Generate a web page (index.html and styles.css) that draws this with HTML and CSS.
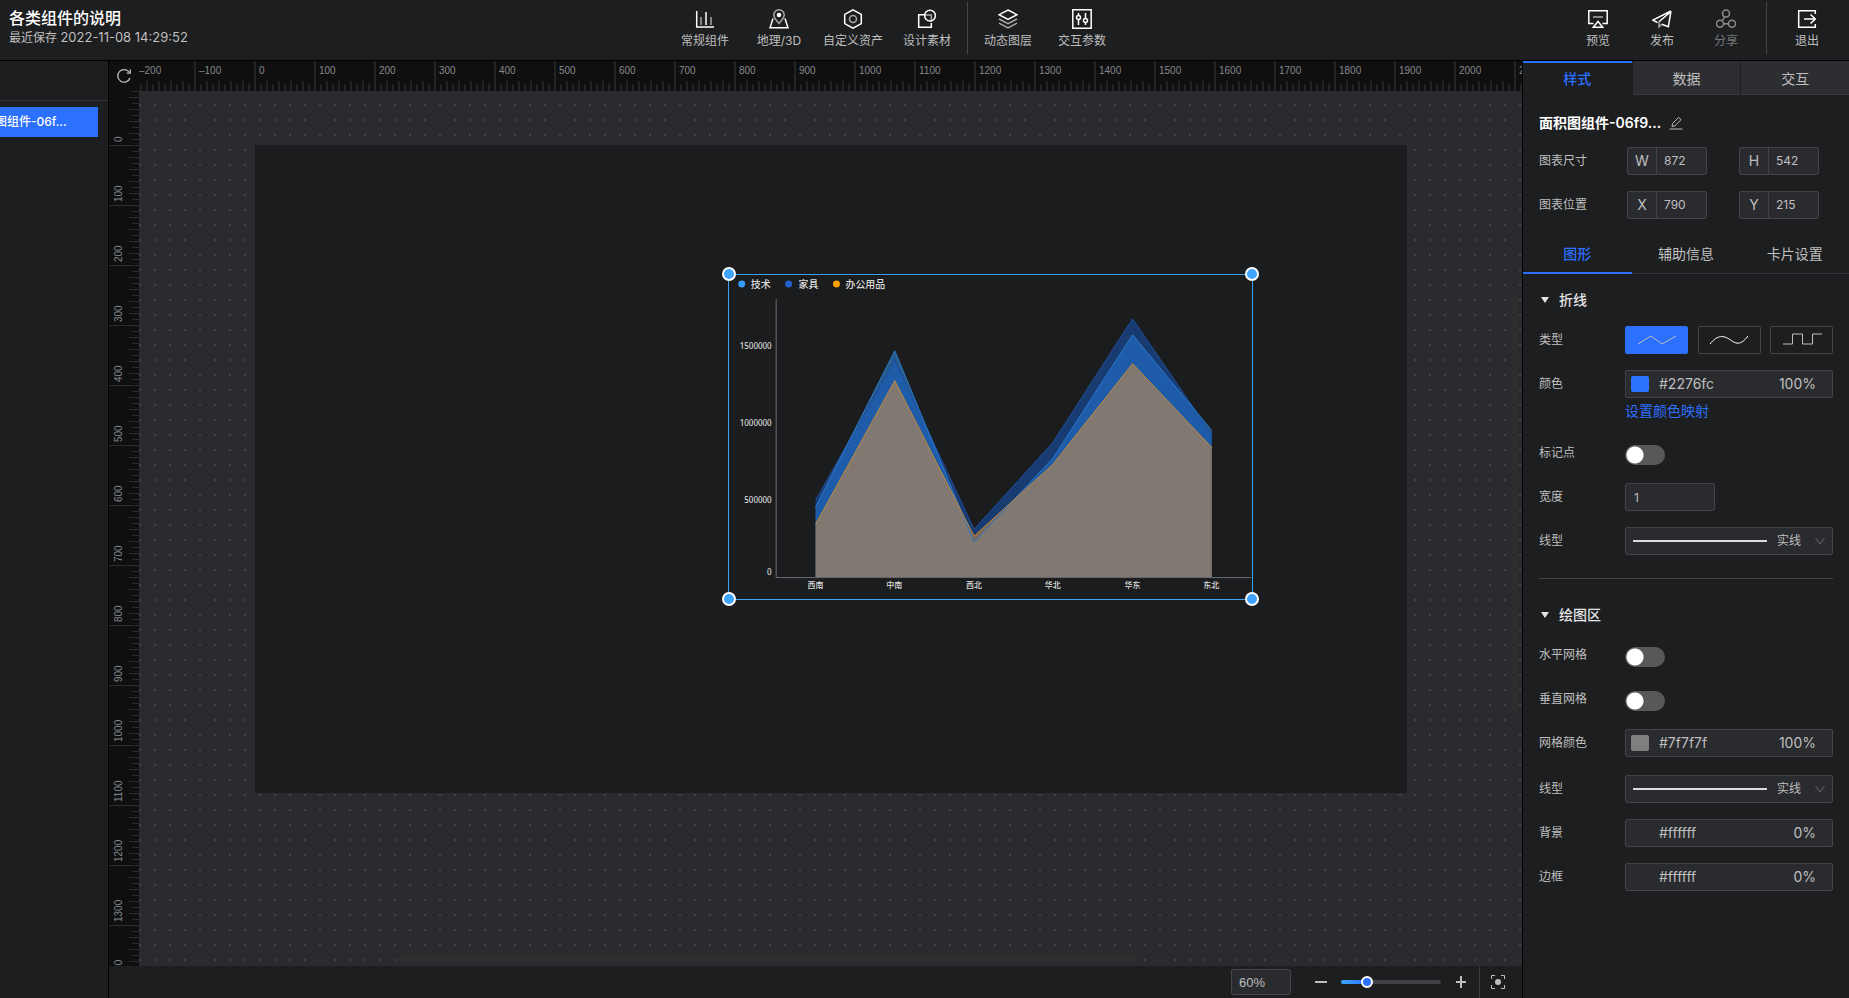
FILE: index.html
```html
<!DOCTYPE html>
<html lang="zh-CN">
<head>
<meta charset="utf-8">
<meta name="viewport" content="width=device-width, initial-scale=1">
<title>各类组件的说明</title>
<link rel="stylesheet" href="styles.css">
</head>
<body>
<div class="app">
  <header class="topbar">
    <div class="doc">
      <h1 class="doc-title">各类组件的说明</h1>
      <p class="doc-saved">最近保存 <time class="doc-time">2022-11-08 14:29:52</time></p>
    </div>
    <nav class="tools">
      <button class="tool" type="button">
        <svg class="icon" viewBox="0 0 20 20"><path d="M1.7 2v16H19" /><path class="dim" d="M6 8v8M16 8v8" /><path d="M11 3v13" /></svg>
        常规组件
      </button>
      <button class="tool" type="button">
        <svg class="icon" viewBox="0 0 20 20"><path d="M4 9.500 1 18.800h18L16 9.500" /><path class="dim" d="M10 14.500C7 11 4.800 9 4.800 6a5.200 5.200 0 0 1 10.400 0c0 3-2.200 5-5.200 8.500z" /><circle class="solid" cx="10" cy="6" r="1.500" /></svg>
        地理/3D
      </button>
      <button class="tool" type="button">
        <svg class="icon" viewBox="0 0 20 20"><path d="m10 .8 8.300 4.600v9.200L10 19.200l-8.300-4.600V5.400z" /><circle class="dim" cx="10" cy="10" r="3.500" /></svg>
        自定义资产
      </button>
      <button class="tool" type="button">
        <svg class="icon" viewBox="0 0 20 20"><path d="M7 5.700H1.700v12.600h12.600V14" /><path class="dim" d="M8 6h6.300v7" /><circle cx="13" cy="6.600" r="5.400" /></svg>
        设计素材
      </button>
      <span class="rule"></span>
      <button class="tool" type="button">
        <svg class="icon" viewBox="0 0 20 20"><path d="m10 1 9 4.700-9 4.700-9-4.700z" /><path class="dim" d="m1 10 9 4.600L19 10M1 14.200l9 4.700 9-4.700" /></svg>
        动态图层
      </button>
      <button class="tool" type="button">
        <svg class="icon" viewBox="0 0 20 20"><path d="M.8.8h18.400v18.400H.8z" /><path d="M6.500 4v2.500M6.500 10.500V16M13.500 4v5.500M13.500 13.500V16" /><circle cx="6.500" cy="8.500" r="2" /><circle cx="13.500" cy="11.500" r="2" /></svg>
        交互参数
      </button>
    </nav>
    <div class="actions">
      <button class="action" type="button">
        <svg class="icon" viewBox="0 0 20 20"><path d="M5.500 14.500H.8V1.700h18.400v12.800h-4.700" /><path d="M5.300 18.300 10 12.500l4.700 5.800z" /><path class="dim" d="M5 8h10" /></svg>
        预览
      </button>
      <button class="action" type="button">
        <svg class="icon" viewBox="0 0 20 20"><path d="M19 2 .9 11.200l4.600 2.300M19 2l-2.700 15.800-6.500-2.600M19 2.500 7 12.800" /><path class="dim" d="M7 12.500v5.300L10 15" /></svg>
        发布
      </button>
      <button class="action" type="button" disabled>
        <svg class="icon" viewBox="0 0 20 20"><circle cx="10" cy="4.500" r="3.500" /><circle cx="4" cy="14.800" r="3.500" /><circle cx="16" cy="14.800" r="3.500" /><path d="M8.500 8 6.200 11.800M8 14.800h4.500" /></svg>
        分享
      </button>
      <span class="rule"></span>
      <button class="action exit" type="button">
        <svg class="icon" viewBox="0 0 20 20"><path d="M18.300 5V1.700H1.700v16.600h16.600V15" /><path d="M7 10h11M13.500 5.500 18.300 10l-4.800 4.500" /></svg>
        退出
      </button>
    </div>
  </header>

  <div class="workspace">
    <aside class="layers">
      <div class="layers-head"></div>
      <button class="layer" type="button">面积图组件-06f...</button>
    </aside>

    <main class="stage">
      <button class="corner" type="button" aria-label="重置视图">
        <svg class="corner-icon" viewBox="0 0 16 16"><path d="M13.400 4.500A6.300 6.300 0 1 0 14 10" /><path d="M14.300 1.500v3.700h-3.600" /></svg>
      </button>
      <div class="ruler-x">
        <div class="marks-x">
          <span>–200</span><span>–100</span><span>0</span><span>100</span><span>200</span><span>300</span><span>400</span><span>500</span><span>600</span><span>700</span><span>800</span><span>900</span><span>1000</span><span>1100</span><span>1200</span><span>1300</span><span>1400</span><span>1500</span><span>1600</span><span>1700</span><span>1800</span><span>1900</span><span>2000</span><span>2100</span>
        </div>
      </div>
      <div class="ruler-y">
        <div class="marks-y">
          <span>0</span><span>100</span><span>200</span><span>300</span><span>400</span><span>500</span><span>600</span><span>700</span><span>800</span><span>900</span><span>1000</span><span>1100</span><span>1200</span><span>1300</span><span>1400</span>
        </div>
      </div>
      <div class="canvas">
        <div class="artboard">
          <div class="widget">
            <svg class="chart" viewBox="0 0 523 325" role="img" aria-label="面积图">
              <g class="legend">
                <circle cx="12" cy="9" r="3.500" fill="#339af5" /><text x="21" y="13">技术</text>
                <circle cx="59" cy="9" r="3.500" fill="#245fcb" /><text x="69" y="13">家具</text>
                <circle cx="107" cy="9" r="3.500" fill="#f8a100" /><text x="116" y="13">办公用品</text>
              </g>
              <path class="axis" d="M46.500 24v279.500H523" />
              <g class="y-labels">
                <text x="42" y="74">1500000</text>
                <text x="42" y="151">1000000</text>
                <text x="42" y="229">500000</text>
                <text x="42" y="301">0</text>
              </g>
              <path class="area tech" d="M86 233 165.500 76l79.500 192 79-84 80-124 79.500 96v147H86z" />
              <path class="area furniture" d="M86 226 165.500 85l79.500 170 79-87 80-124 79.500 116v143H86z" />
              <path class="area office" d="M86 250 165.500 106l79.500 156 79-72 80-101 79.500 84v130H86z" />
              <path class="line furniture-line" d="M86 226 165.500 85l79.500 170 79-87 80-124 79.500 116" />
              <path class="line tech-line" d="M86 233 165.500 76l79.500 192 79-84 80-124 79.500 96" />
              <path class="line office-line" d="M86 250 165.500 106l79.500 156 79-72 80-101 79.500 84" />
              <g class="x-labels">
                <text x="86" y="314">西南</text><text x="165" y="314">中南</text><text x="245" y="314">西北</text><text x="324" y="314">华北</text><text x="404" y="314">华东</text><text x="483" y="314">东北</text>
              </g>
            </svg>
            <span class="handle nw"></span><span class="handle ne"></span><span class="handle sw"></span><span class="handle se"></span>
          </div>
        </div>
        <span class="scroll-y"></span>
        <span class="scroll-x"></span>
      </div>
      <footer class="zoombar">
        <input class="zoom-value" type="text" value="60%" aria-label="缩放比例">
        <button class="zoom-btn" type="button" aria-label="缩小"><svg viewBox="0 0 12 12"><path d="M0 6h12" /></svg></button>
        <input class="zoom-range" type="range" min="10" max="230" value="60" aria-label="缩放">
        <button class="zoom-btn" type="button" aria-label="放大"><svg viewBox="0 0 12 12"><path d="M1 6h10M6 0v12" /></svg></button>
        <button class="fit" type="button" aria-label="适应画布"><svg viewBox="0 0 14 14"><path d="M.5 4V.5H4M10 .5h3.500V4M13.500 10v3.500H10M4 13.500H.5V10" /><circle cx="7" cy="7" r="3" /></svg></button>
      </footer>
    </main>

    <aside class="inspector">
      <div class="tabs">
        <button class="tab active" type="button">样式</button>
        <button class="tab" type="button">数据</button>
        <button class="tab" type="button">交互</button>
      </div>
      <div class="basics">
        <div class="name">
          <h2 class="name-text">面积图组件-06f9...</h2>
          <button class="edit" type="button" aria-label="重命名"><svg viewBox="0 0 14 14"><path d="M.5 13h13M3 10.500l.6-3L9.700 1.400l2.300 2.300L5.900 9.900z" /></svg></button>
        </div>
        <div class="pair">
          <span class="label">图表尺寸</span>
          <div class="affix"><label for="w">W</label><input id="w" type="text" value="872"></div>
          <div class="affix"><label for="h">H</label><input id="h" type="text" value="542"></div>
        </div>
        <div class="pair">
          <span class="label">图表位置</span>
          <div class="affix"><label for="x">X</label><input id="x" type="text" value="790"></div>
          <div class="affix"><label for="y">Y</label><input id="y" type="text" value="215"></div>
        </div>
      </div>
      <div class="subtabs">
        <button class="subtab active" type="button">图形</button>
        <button class="subtab" type="button">辅助信息</button>
        <button class="subtab" type="button">卡片设置</button>
      </div>

      <section class="section">
        <h3 class="section-title">折线</h3>
        <div class="fields">
          <div class="field">
            <span class="label">类型</span>
            <div class="types">
              <button class="type selected" type="button" aria-label="折线"><svg viewBox="0 0 40 14"><path d="M1 11 14 3l11 8 14-8" /></svg></button>
              <button class="type bright" type="button" aria-label="曲线"><svg viewBox="0 0 40 14"><path d="M1 11C9 1 15 3 20 6s10 9 19-3" /></svg></button>
              <button class="type" type="button" aria-label="阶梯"><svg viewBox="0 0 40 14"><path d="M1 11h9.500V1h10v10h10V1H40" /></svg></button>
            </div>
          </div>
          <div class="field">
            <label class="label" for="color">颜色</label>
            <div class="control">
              <div class="color"><button class="swatch blue" type="button" aria-label="选择颜色"></button><input id="color" class="hex" type="text" value="#2276fc"><input class="alpha" type="text" value="100%" aria-label="颜色透明度"></div>
              <a class="map-link" href="#">设置颜色映射</a>
            </div>
          </div>
          <div class="field">
            <label class="label" for="marker">标记点</label>
            <input id="marker" class="switch" type="checkbox">
          </div>
          <div class="field">
            <label class="label" for="width">宽度</label>
            <input id="width" class="number" type="text" value="1">
          </div>
          <div class="field">
            <label class="label" for="dash">线型</label>
            <div class="picker"><span class="sample"></span><select id="dash"><option>实线</option></select><svg viewBox="0 0 10 8"><path d="m.5 1 4.500 6L9.500 1" /></svg></div>
          </div>
        </div>
      </section>

      <section class="section plot">
        <h3 class="section-title">绘图区</h3>
        <div class="fields">
          <div class="field">
            <label class="label" for="hgrid">水平网格</label>
            <input id="hgrid" class="switch" type="checkbox">
          </div>
          <div class="field">
            <label class="label" for="vgrid">垂直网格</label>
            <input id="vgrid" class="switch" type="checkbox">
          </div>
          <div class="field">
            <label class="label" for="gridcolor">网格颜色</label>
            <div class="color"><button class="swatch grey" type="button" aria-label="选择网格颜色"></button><input id="gridcolor" class="hex" type="text" value="#7f7f7f"><input class="alpha" type="text" value="100%" aria-label="网格透明度"></div>
          </div>
        </div>
        <div class="fields extra">
          <div class="field">
            <label class="label" for="griddash">线型</label>
            <div class="picker"><span class="sample"></span><select id="griddash"><option>实线</option></select><svg viewBox="0 0 10 8"><path d="m.5 1 4.500 6L9.500 1" /></svg></div>
          </div>
          <div class="field">
            <label class="label" for="bg">背景</label>
            <div class="color"><button class="swatch" type="button" aria-label="选择背景颜色"></button><input id="bg" class="hex" type="text" value="#ffffff"><input class="alpha" type="text" value="0%" aria-label="背景透明度"></div>
          </div>
          <div class="field">
            <label class="label" for="border">边框</label>
            <div class="color"><button class="swatch" type="button" aria-label="选择边框颜色"></button><input id="border" class="hex" type="text" value="#ffffff"><input class="alpha" type="text" value="0%" aria-label="边框透明度"></div>
          </div>
        </div>
      </section>
    </aside>
  </div>
</div>
</body>
</html>
```

FILE: styles.css
```css
:root {
  --panel: #1d1e20;
  --field: #2a2b2f;
  --line: #434446;
  --text: #bfbfbf;
  --blue: #2c70ff;
}

* { box-sizing: border-box; }

body {
  margin: 0;
  background: var(--panel);
  color: var(--text);
  font: 12px/16px Inter, "Noto Sans CJK SC", sans-serif;
}

h1, h2, h3, p { margin: 0; }

button, input, select {
  margin: 0;
  padding: 0;
  border: 0;
  background: none;
  color: inherit;
  font: inherit;
}

svg { fill: none; stroke: currentColor; }

.app {
  display: flex;
  flex-direction: column;
  height: 100vh;
}

/* Top bar */
.topbar {
  display: grid;
  grid-template-columns: minmax(0, 668fr) auto minmax(0, 730fr);
  height: 61px;
  flex: none;
  border-bottom: 1px solid #000;
}

.doc { padding: 8px 9px 0; white-space: nowrap; }

.doc-title {
  color: #fff;
  font-size: 16px;
  font-weight: 500;
  line-height: 20px;
}

.doc-saved { font-size: 12px; line-height: 18px; }
.doc-time { font-size: 13px; }

.tools, .actions { display: flex; }
.actions { justify-content: flex-end; padding-right: 10px; }

.tool, .action {
  display: flex;
  flex-direction: column;
  align-items: center;
  gap: 4px;
  padding-top: 9px;
  white-space: nowrap;
}

.tool { width: 74px; }
.action { width: 64px; }
.action:disabled { color: #77787a; }

.rule {
  width: 1px;
  height: 52px;
  margin: 2px 3px 0;
  background: #444547;
}
.actions .rule { margin: 2px 8px 0; }

.icon {
  width: 20px;
  height: 20px;
  stroke: #fff;
  stroke-width: 1.500;
}
.icon .dim { stroke: #a8a8a8; }
.icon .solid { fill: #fff; }
.action:disabled .icon { stroke: #8a8b8c; }

/* Workspace */
.workspace {
  display: grid;
  grid-template: minmax(0, 1fr) / 109px minmax(0, 1fr) 326px;
  flex: 1;
  min-height: 0;
}

.layers { overflow: hidden; border-right: 1px solid #000; }
.layers-head { height: 40px; border-bottom: 1px solid #343538; }

.layer {
  width: 158px;
  height: 30px;
  margin: 6px 0 0 -60px;
  padding-left: 31px;
  background: var(--blue);
  color: #fff;
  font-weight: 500;
  text-align: left;
}

.stage {
  display: grid;
  grid-template: 30px minmax(0, 1fr) 32px / 30px minmax(0, 1fr);
  border-right: 1px solid #000;
}

.corner { display: grid; place-items: center; background: #0f0f0f; }
.corner-icon { width: 16px; height: 16px; stroke-width: 1.300; }

.ruler-x, .ruler-y {
  overflow: hidden;
  background-color: #0f0f0f;
  color: #85888d;
  font: 10px/12px "Liberation Sans", sans-serif;
}

/* Short tick every 12px, medium tick between, full tick every 60px */
.ruler-x {
  background-image:
    linear-gradient(90deg, #232425 2px, transparent 2px),
    linear-gradient(90deg, #232425 2px, transparent 2px),
    linear-gradient(90deg, #232425 2px, transparent 2px);
  background-size: 60px 100%, 12px 10px, 12px 7px;
  background-position: 55px 0, 7px 100%, 1px 100%;
  background-repeat: repeat-x;
}

.marks-x { display: flex; width: max-content; margin-left: -4px; padding-top: 4px; }
.marks-x span { width: 60px; padding-left: 4px; }

.ruler-y {
  background-image:
    linear-gradient(#2c2d2e 1px, transparent 1px),
    linear-gradient(#2c2d2e 1px, transparent 1px),
    linear-gradient(#2c2d2e 1px, transparent 1px);
  background-size: 100% 60px, 10px 12px, 7px 12px;
  background-position: 0 54px, 100% 6px, 100% 0;
  background-repeat: repeat-y;
}

.marks-y { margin-top: -6px; }
.marks-y span {
  display: block;
  width: 12px;
  height: 60px;
  margin-left: 4px;
  padding-top: 3px;
  writing-mode: vertical-rl;
  transform: rotate(180deg);
}

.canvas {
  position: relative;
  overflow: hidden;
  background-color: var(--field);
  background-image: conic-gradient(from 270deg at 2px 2px, #424347 90deg, transparent 90deg);
  background-size: 15px 15px;
  background-position: 0 13px;
}

.artboard {
  position: absolute;
  left: 116px;
  top: 54px;
  width: 1152px;
  height: 648px;
  background: #1b1c1e;
}

.widget {
  position: absolute;
  left: 473px;
  top: 129px;
  width: 525px;
  height: 326px;
  border: 1px solid #3e9ffb;
}

.chart { display: block; width: 100%; height: 100%; }
.chart text { fill: #dcdcdc; stroke: none; font: 500 8px "Noto Sans", "Noto Sans CJK SC", sans-serif; }
.chart .legend { stroke: none; }
.chart .legend text { font-size: 10px; }
.y-labels text { text-anchor: end; }
.x-labels text { text-anchor: middle; }
.axis { stroke: #6b6c70; }
.area { stroke: none; fill-opacity: 0.5; }
.tech { fill: #339af5; }
.furniture { fill: #155cc6; }
.office { fill: #e49739; }
.furniture-line { stroke: #1f4c9a; }
.tech-line { stroke: #2a78cc; }
.office-line { stroke: #c08a40; }

.handle {
  position: absolute;
  width: 14px;
  height: 14px;
  border: 2px solid #fff;
  border-radius: 50%;
  background: #3fa4ff;
}
.nw, .ne { top: -8px; }
.sw, .se { bottom: -7px; }
.nw, .sw { left: -7px; }
.ne, .se { right: -7px; }

.scroll-y, .scroll-x { position: absolute; border-radius: 3px; background: #2e2e2e; }
.scroll-y { right: 4px; top: 203px; width: 6px; height: 417px; }
.scroll-x { left: 260px; bottom: 4px; width: 739px; height: 6px; }

.zoombar {
  grid-column: 1 / -1;
  display: flex;
  align-items: center;
  justify-content: flex-end;
}

.zoom-value {
  width: 60px;
  height: 26px;
  margin-right: 24px;
  padding-left: 7px;
  border: 1px solid var(--line);
  border-radius: 2px;
  background: var(--field);
  font: 13px "Liberation Sans", sans-serif;
}

.zoom-btn, .fit { display: grid; place-items: center; }
.zoom-btn svg { width: 12px; height: 12px; stroke-width: 2; }

.zoom-range {
  width: 100px;
  height: 12px;
  margin: 0 14px;
  appearance: none;
}
.zoom-range::-webkit-slider-runnable-track {
  height: 4px;
  border-radius: 2px;
  background: linear-gradient(90deg, #3fa9ff, var(--blue) 26px, #414247 26px);
}
.zoom-range::-webkit-slider-thumb {
  width: 12px;
  height: 12px;
  margin-top: -4px;
  border: 2px solid #fff;
  border-radius: 50%;
  background: var(--blue);
  appearance: none;
}

.fit {
  width: 43px;
  height: 32px;
  margin-left: 12px;
  padding-right: 6px;
  border-left: 1px solid #3a3b3d;
}
.fit svg { width: 14px; height: 14px; }
.fit circle { fill: currentColor; stroke: none; }

/* Inspector */
.inspector { overflow: hidden; }

.tabs, .subtabs { display: grid; grid-template-columns: repeat(3, 1fr); }

.tab {
  height: 34px;
  border-top: 2px solid #2d2e32;
  border-bottom: 1px solid #3a3b3d;
  border-left: 1px solid var(--panel);
  background: #2d2e32;
  font-size: 14px;
}
.tab.active {
  border-color: var(--blue) transparent transparent;
  border-left: 0;
  background: none;
  color: var(--blue);
  font-weight: 500;
}

.basics {
  display: flex;
  flex-direction: column;
  gap: 16px;
  padding: 18px 30px 17px 16px;
}

.name { display: flex; align-items: center; gap: 8px; height: 20px; margin-bottom: -2px; }
.name-text { color: #fff; font-size: 14px; font-weight: 600; line-height: 20px; }
.edit { display: grid; }
.edit svg { width: 14px; height: 14px; }

.pair {
  display: grid;
  grid-template-columns: 56px 80px 80px;
  justify-content: space-between;
  align-items: center;
}

.affix {
  display: flex;
  height: 28px;
  border: 1px solid var(--line);
  border-radius: 2px;
  background: var(--field);
}
.affix label {
  width: 29px;
  flex: none;
  border-right: 1px solid var(--line);
  font-size: 14px;
  line-height: 26px;
  text-align: center;
}
.affix input { width: 100%; min-width: 0; padding-left: 7px; }

.subtabs { border-bottom: 1px solid #343538; }
.subtab { height: 38px; border-bottom: 2px solid transparent; margin-bottom: -1px; font-size: 14px; }
.subtab.active { border-color: var(--blue); color: var(--blue); font-weight: 500; }

.section { padding: 16px 16px 23px; }
.section.plot { margin: 0 16px; padding: 26px 0 0; border-top: 1px solid var(--line); }

.section-title {
  display: flex;
  align-items: center;
  gap: 10px;
  margin-bottom: 16px;
  padding-left: 2px;
  color: #e4e4e4;
  font-size: 14px;
  font-weight: 500;
  line-height: 20px;
}
.section-title::before {
  content: "";
  border: solid transparent;
  border-width: 6px 4px 0;
  border-top-color: #e4e4e4;
}

.fields { display: flex; flex-direction: column; gap: 16px; }
.fields.extra { margin-top: 18px; }

.field {
  display: grid;
  grid-template-columns: 86px minmax(0, 1fr);
  min-height: 28px;
}
.label { line-height: 28px; }

.types { display: flex; justify-content: space-between; }
.type {
  display: grid;
  place-items: center;
  width: 63px;
  height: 28px;
  border: 1px solid var(--line);
  border-radius: 2px;
}
.type.selected { border-color: var(--blue); background: var(--blue); }
.type.bright { color: #fff; }
.type svg { width: 40px; height: 14px; }

.color {
  display: flex;
  align-items: center;
  height: 28px;
  padding: 0 16px 0 5px;
  border: 1px solid var(--line);
  border-radius: 2px;
  background: var(--field);
  font-size: 14px;
}
.swatch { width: 18px; height: 16px; flex: none; border-radius: 2px; }
.swatch.blue { background: #2c74fe; }
.swatch.grey { background: #7f7f7f; }
.hex { flex: 1; min-width: 0; padding-left: 10px; }
.alpha { width: 48px; text-align: right; }

.map-link {
  display: block;
  height: 25px;
  color: var(--blue);
  font-size: 14px;
  line-height: 26px;
  text-decoration: none;
}

.switch {
  align-self: end;
  width: 40px;
  height: 20px;
  margin-bottom: 2px;
  border-radius: 10px;
  background: radial-gradient(circle at 10px 50%, #fff 8px, #585858 9px);
  appearance: none;
}

.number {
  width: 90px;
  height: 28px;
  padding-left: 8px;
  border: 1px solid var(--line);
  border-radius: 2px;
  background: var(--field);
}

.picker {
  display: flex;
  align-items: center;
  height: 28px;
  padding: 0 7px;
  border: 1px solid var(--line);
  border-radius: 2px;
  background: var(--field);
}
.sample { flex: 1; height: 2px; margin-right: 10px; background: #dcdcdc; }
.picker select { width: 38px; appearance: none; }
.picker select option { background: var(--field); }
.picker svg { width: 10px; height: 8px; color: #68696c; }
```
